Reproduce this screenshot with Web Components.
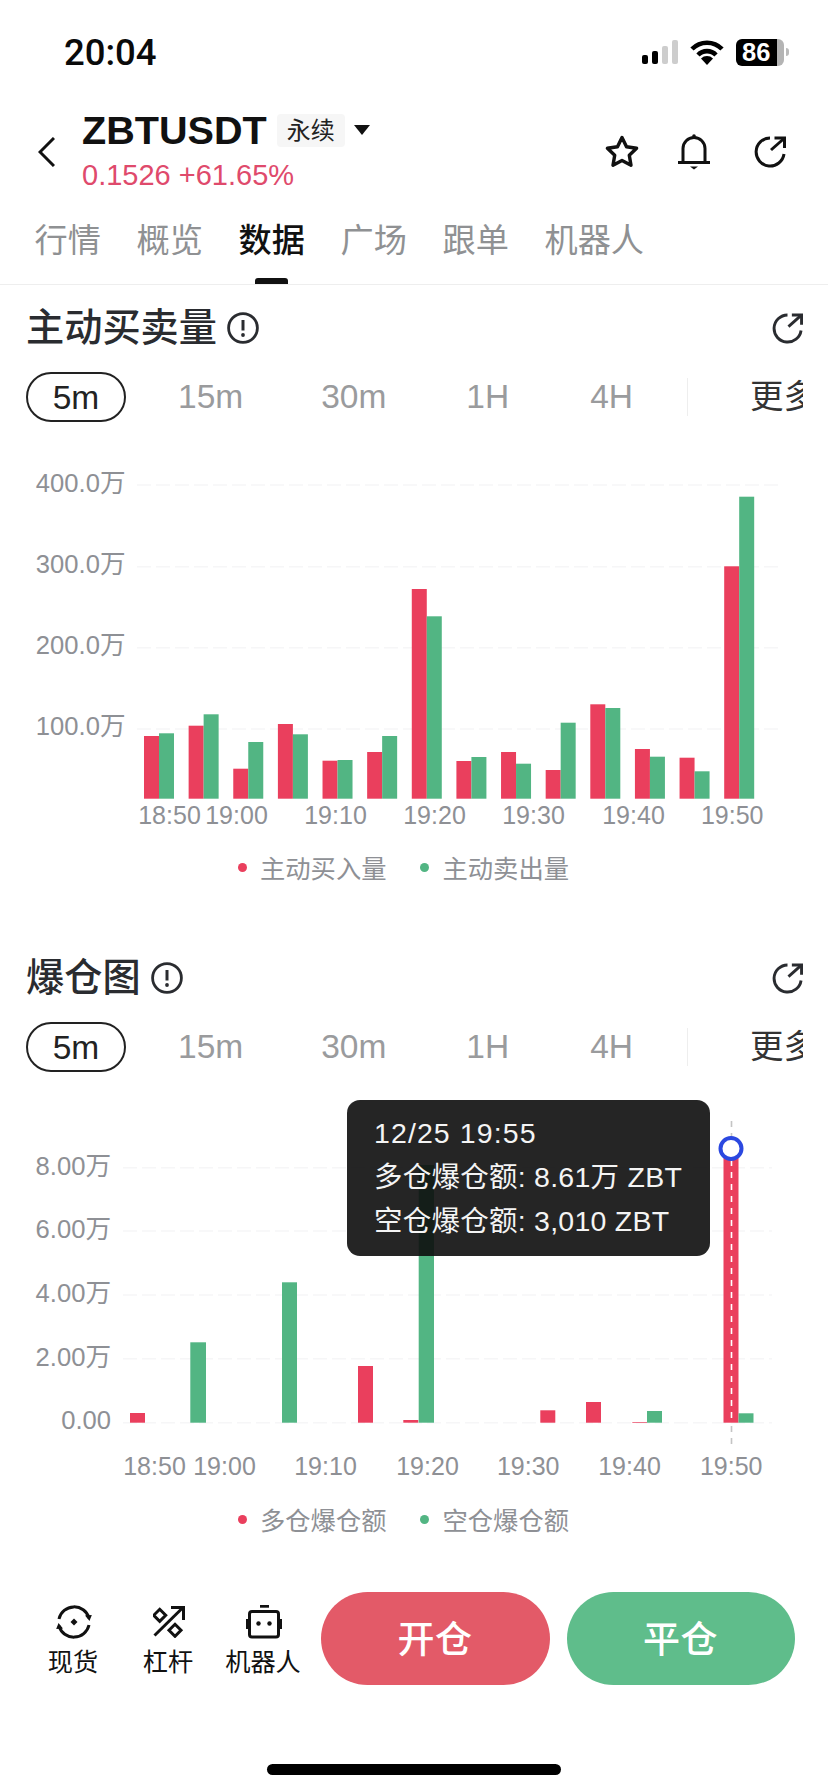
<!DOCTYPE html>
<html lang="zh"><head><meta charset="utf-8"><title>ZBTUSDT</title>
<style>
html,body{margin:0;padding:0;background:#fff}
body{width:828px;height:1792px;overflow:hidden;font-family:"Liberation Sans","Noto Sans CJK SC",sans-serif;color:#111}
</style></head><body>
<app-page>
  <status-bar></status-bar>
  <coin-header></coin-header>
  <nav-tabs></nav-tabs>
  <chart-section id="c1" title-text="主动买卖量"></chart-section>
  <chart-section id="c2" title-text="爆仓图"></chart-section>
  <action-bar></action-bar>
  <home-bar></home-bar>
</app-page>
<script>
const FONT='"Liberation Sans","Noto Sans CJK SC",sans-serif';
function g1(){
  const t=[[736,733.3],[725.7,714.3],[768.7,742],[724,734.3],[760.7,760],[752,736],[589,616.3],[761,757],[752,763.7],[770,722.7],[704.3,708],[749,756.7],[757.7,771.3],[566.3,496.7]];
  const r=[];t.forEach((v,i)=>{const x=144+i*44.63;r.push([x,x+15,v[0],0],[x+15,x+30,v[1],1]);});return r;
}
const CHARTS={
 c1:{top:422,h:423,base:798.7,grid:[485,566.7,647.7,729],gx:[137,782],bars:g1(),yr:125.5,
  yl:[['400.0万',483],['300.0万',564],['200.0万',645],['100.0万',726]],
  xl:[['18:50',169.5],['19:00',236.5],['19:10',335.5],['19:20',434.5],['19:30',533.5],['19:40',633.5],['19:50',732.2]],xy:815,
  leg:['主动买入量','主动卖出量'],lx:237.5,lm:2},
 c2:{top:1072,h:428,base:1422.7,grid:[1167.7,1231,1295,1358.7,1422.7],gx:[123,772],yr:111,
  bars:[[130,145,1413,0],[190.3,206,1342.3,1],[282,297,1282.3,1],[358,373,1366,0],[403.3,418.3,1420,0],[418.7,434,1165,1],[540.3,555.3,1410.3,0],[586,601,1402,0],[632.3,647,1422,0],[647,662,1411,1],[723.5,738.5,1148,0],[738.5,753.5,1413.3,1]],
  cross:`<line x1="731.5" x2="731.5" y1="1121" y2="1148" stroke="#c4c4c4" stroke-width="1.6" stroke-dasharray="6 6"/><line x1="731.5" x2="731.5" y1="1148" y2="1423" stroke="#fff" stroke-width="1.6" stroke-dasharray="6 6"/><line x1="731.5" x2="731.5" y1="1426" y2="1446" stroke="#c4c4c4" stroke-width="1.6" stroke-dasharray="6 6"/><circle cx="731" cy="1148.5" r="10.5" fill="#fff" stroke="#2b48e0" stroke-width="4"/>`,
  yl:[['8.00万',1166],['6.00万',1229],['4.00万',1293],['2.00万',1357],['0.00',1420]],
  xl:[['18:50',154.5],['19:00',224.5],['19:10',325.5],['19:20',427.5],['19:30',528.2],['19:40',629.5],['19:50',731.2]],xy:1466.7,
  leg:['多仓爆仓额','空仓爆仓额'],lx:237.5,lm:-1,
  tip:'<div class="d">12/25 19:55</div><div>多仓爆仓额: 8.61万 ZBT</div><div>空仓爆仓额: 3,010 ZBT</div>'}
};
const ICON={
 share:'<svg xmlns="http://www.w3.org/2000/svg" viewBox="0 0 32 32" fill="none" stroke="currentColor" stroke-width="3"><path d="M16 2 A14 14 0 1 0 30 18"/><path d="M17 14 L30 2.5"/><path d="M20.5 2 H30.5 V12"/></svg>',
 info:'<svg xmlns="http://www.w3.org/2000/svg" viewBox="0 0 32 32" fill="none" stroke="currentColor" stroke-width="2.8"><circle cx="16" cy="16" r="14.4"/><path d="M16 8 V18.5" stroke-width="3"/><circle cx="16" cy="23" r="1.9" fill="currentColor" stroke="none"/></svg>'
};
function def(name,html){
  const t=document.createElement('template');t.innerHTML=html;
  customElements.define(name,class extends HTMLElement{
    constructor(){super();this.attachShadow({mode:'open'}).appendChild(t.content.cloneNode(true));}
  });
}
def('app-page',`<style>:host{display:flex;flex-direction:column;width:828px;height:1792px;overflow:hidden;background:#fff}</style><slot></slot>`);

def('status-bar',`<style>
:host{display:flex;align-items:center;height:104px;box-sizing:border-box;padding-left:64px}
.t{font:500 36.5px/40px Roboto,"Liberation Sans",sans-serif;color:#0a0a0a;flex:1;padding-top:2px}
.r{display:flex;align-items:center;margin-right:39px}
.bat{width:48px;height:27px;border-radius:6px;background:linear-gradient(90deg,#000 0 41px,#b4b4b4 41px);color:#fff;font:700 25.5px/27px "Liberation Sans",sans-serif;box-sizing:border-box;padding-left:6px}
.nub{width:3px;height:8px;background:#bbb;border-radius:0 3px 3px 0;margin-left:2px}
svg{display:block}
</style>
<div class="t">20:04</div>
<div class="r">
<svg width="36" height="24" viewBox="0 0 36 24" style="margin-right:12px"><rect x="0" y="15" width="6" height="9" rx="2"/><rect x="10" y="11" width="6" height="13" rx="2"/><rect x="20" y="6" width="6" height="18" rx="2" fill="#cdcdcd"/><rect x="30" y="0" width="6" height="24" rx="2" fill="#cdcdcd"/></svg>
<svg width="34" height="26" viewBox="0 0 34 26" style="margin-right:12px" fill="none" stroke="#000" stroke-width="4.6"><path d="M2 10 A21 21 0 0 1 32 10"/><path d="M8 16 A12.5 12.5 0 0 1 26 16"/><path d="M11 19.6 A8.5 8.5 0 0 1 23 19.6 L17 26 Z" fill="#000" stroke="none"/></svg>
<div class="bat">86</div><div class="nub"></div>
</div>`);

def('coin-header',`<style>
:host{display:flex;align-items:flex-start;height:92px;box-sizing:border-box;padding:6px 0 0 38px;font-family:${FONT}}
.back{margin:27px 0 0 0;width:17px;height:30px;flex:none}
.col{margin-left:27px;flex:1}
.row{display:flex;align-items:center;height:40px}
.sym{font:700 39.6px/40px "Liberation Sans",sans-serif;color:#111}
.tag{margin-left:10px;width:68px;height:33px;background:#f6f6f6;border-radius:4px;font-size:24px;line-height:33px;text-align:center;color:#222}
.tri{margin-left:9px;width:0;height:0;border-left:8px solid transparent;border-right:8px solid transparent;border-top:10px solid #111}
.px{margin-top:7px;font:400 29px/36px "Liberation Sans",sans-serif;color:#df4a6c}
.ic{display:flex;align-items:center;margin:24px 42.5px 0 0;color:#111}
.ic svg{display:block}
</style>
<svg class="back" viewBox="0 0 17 30" fill="none" stroke="#111" stroke-width="3"><path d="M16 1 L2 15 L16 29"/></svg>
<div class="col"><div class="row"><span class="sym">ZBTUSDT</span><span class="tag">永续</span><span class="tri"></span></div><div class="px">0.1526 +61.65%</div></div>
<div class="ic">
<svg width="36" height="36" viewBox="-2 -2 40 40" fill="none" stroke="#111" stroke-width="3.8" stroke-linejoin="round"><path d="M18 2 L23 12.1 L34.2 13.8 L26.1 21.6 L28 32.8 L18 27.5 L8 32.8 L9.9 21.6 L1.8 13.8 L13 12.1 Z"/></svg>
<svg width="32" height="36" viewBox="0 0 32 36" style="margin-left:38px" fill="none" stroke="#111" stroke-width="3"><path d="M5 28 V14.5 A11 11 0 0 1 27 14.5 V28"/><path d="M0 28.5 H32"/><circle cx="16" cy="2" r="1.8" fill="#111" stroke="none"/><path d="M12 32.5 H20 L16 35.5 Z" fill="#111" stroke="none"/></svg>
<svg width="32" height="32" viewBox="0 0 32 32" style="margin-left:44px" fill="none" stroke="#111" stroke-width="3"><path d="M16 2 A14 14 0 1 0 30 18"/><path d="M17 14 L30 2.5"/><path d="M20.5 2 H30.5 V12"/></svg>
</div>`);

def('nav-tabs',`<style>
:host{display:flex;height:89px;box-sizing:border-box;padding:25px 0 0 34.5px;border-bottom:1px solid #eee;font:400 33.2px/40px ${FONT};color:#8f9193}
span{position:relative;width:102px;white-space:nowrap}
.on{color:#111;font-weight:500}
.on::after{content:"";position:absolute;left:16px;top:57px;width:33px;height:6px;background:#111;border-radius:3px 3px 0 0}
</style><span>行情</span><span>概览</span><span class="on">数据</span><span>广场</span><span>跟单</span><span>机器人</span>`);

customElements.define('chart-section',class extends HTMLElement{
  constructor(){super();this.attachShadow({mode:'open'});}
  connectedCallback(){
    const d=CHARTS[this.id];
    const W=828,y0=d.top,h=d.h;
    let s='';
    for(const g of d.grid)s+=`<line x1="${d.gx[0]}" x2="${d.gx[1]}" y1="${g}" y2="${g}" stroke="#f6f6f7" stroke-width="1.4" stroke-dasharray="14 5"/>`;
    for(const b of d.bars)s+=`<rect x="${b[0]}" y="${b[2]}" width="${b[1]-b[0]}" height="${d.base-b[2]}" fill="${b[3]?'#52b583':'#ea3f5d'}"/>`;
    if(d.cross)s+=d.cross;
    for(const l of d.yl)s+=`<text class="y" x="${d.yr}" y="${l[1]+8.5}" text-anchor="end">${l[0]}</text>`;
    for(const l of d.xl)s+=`<text x="${l[1]}" y="${d.xy+8.5}" text-anchor="middle">${l[0]}</text>`;
    this.shadowRoot.innerHTML=`<style>
:host{display:block;height:650px;position:relative;font-family:${FONT}}
.head{display:flex;align-items:center;height:50px;margin:18px 25.5px 0 26px}
.title{font-size:38.2px;line-height:50px;font-weight:500;color:#2a2c30}
.info{width:32px;height:32px;margin-left:10px;color:#2a2c30}
.sp{flex:1}
.share{width:31px;height:31px;color:#2a2c30}
.info svg,.share svg{display:block;width:100%;height:100%}
.tabs{display:flex;align-items:center;height:50px;margin:19px 25.5px 0 26px;overflow:hidden;font-size:33.5px;line-height:52px;color:#9a9b9d;white-space:nowrap}
.pill{box-sizing:border-box;width:100px;height:50px;line-height:47px;border:2px solid #222;border-radius:25px;text-align:center;color:#222;margin-right:52px;flex:none}
.t15{margin-right:78px}.t30{margin-right:80px}.t1{margin-right:81px}.t4{margin-right:54px}
.sep{width:1px;height:38px;background:#eee;margin-right:62px;flex:none}
.more{color:#333;flex:none}
.chart{position:relative;height:${h}px}
svg.c{display:block;position:absolute;left:0;top:0}
svg.c text{font:25px ${FONT};fill:#8e9095}
svg.c text.y{font-size:25.6px}
.legend{display:flex;align-items:center;height:40px;padding-left:${d.lx}px;font-size:25.3px;color:#8e9095}
.dot{width:9px;height:9px;border-radius:50%;margin-right:13.5px;flex:none}
.lab{width:125px;margin-right:35px;white-space:nowrap}
.tip{position:absolute;left:347px;top:28px;width:363px;height:156px;box-sizing:border-box;padding:11px 0 0 27px;border-radius:13px;background:rgba(13,13,13,.9);color:#f4f4f4;font-size:28.5px;line-height:44px;white-space:nowrap;letter-spacing:.25px}
.tip .d{letter-spacing:1.1px}
</style>
<div class="head"><span class="title">${this.getAttribute('title-text')}</span><span class="info">${ICON.info}</span><span class="sp"></span><span class="share">${ICON.share}</span></div>
<div class="tabs"><span class="pill">5m</span><span class="t15">15m</span><span class="t30">30m</span><span class="t1">1H</span><span class="t4">4H</span><span class="sep"></span><span class="more">更多</span></div>
<div class="chart"><svg class="c" width="${W}" height="${h}" viewBox="0 ${y0} ${W} ${h}">${s}</svg>${d.tip?`<div class="tip">${d.tip}</div>`:''}</div>
<div class="legend" style="margin-top:${d.lm}px"><span class="dot" style="background:#ea3f5d"></span><span class="lab">${d.leg[0]}</span><span class="dot" style="background:#52b583"></span><span class="lab">${d.leg[1]}</span></div>`;
  }
});

def('action-bar',`<style>
:host{display:flex;align-items:flex-start;height:93px;margin-top:7px;padding-left:25.5px;font-family:${FONT};color:#111}
.it{width:95px;display:flex;flex-direction:column;align-items:center;flex:none}
.ib{height:37px;margin-top:11px;display:flex;align-items:center}
.ib svg{position:relative;left:1px}
.it span{font-size:25.2px;line-height:34px;margin-top:5px;white-space:nowrap}
svg{display:block}
.btn{height:93px;border-radius:47px;color:#fff;font-size:37px;font-weight:500;line-height:97px;text-align:center;letter-spacing:.5px;flex:none}
.a{width:229px;margin-left:10px;background:#e35a68}
.b{width:228px;margin-left:17px;background:#5fbd8b}
</style>
<div class="it"><div class="ib"><svg width="36" height="36" viewBox="0 0 36 36" fill="none" stroke="#111" stroke-width="3"><path d="M3 15 A15.5 15.5 0 0 1 33 14"/><path d="M29 11.5 L33.5 17 L35.8 11" fill="#111" stroke="none"/><path d="M33 21 A15.5 15.5 0 0 1 3 22"/><path d="M7 24.5 L2.5 19 L0.2 25" fill="#111" stroke="none"/><path d="M18 14.5 L21.5 18 L18 21.5 L14.5 18 Z" fill="#111" stroke="none"/></svg></div><span>现货</span></div>
<div class="it"><div class="ib"><svg width="32" height="32" viewBox="0 0 32 32" fill="none" stroke="#111" stroke-width="3"><path d="M6.7 3.3 L12.7 9.3 L6.7 15.3 L.7 9.3 Z"/><path d="M22 18.3 L28 24.3 L22 30.3 L16 24.3 Z"/><path d="M1.5 29.5 L30 1.5"/><path d="M18 1.5 H30.5 V14"/></svg></div><span>杠杆</span></div>
<div class="it"><div class="ib"><svg width="36" height="34" viewBox="0 0 36 34" fill="none" stroke="#111" stroke-width="3"><path d="M14 1.2 H23"/><rect x="3.5" y="6.5" width="29" height="25.5" rx="2.5"/><rect x="0" y="14" width="3" height="10" fill="#111" stroke="none"/><rect x="33" y="14" width="3" height="10" fill="#111" stroke="none"/><circle cx="12.5" cy="18.5" r="2.2" fill="#111" stroke="none"/><circle cx="23.5" cy="18.5" r="2.2" fill="#111" stroke="none"/></svg></div><span>机器人</span></div>
<div class="btn a">开仓</div><div class="btn b">平仓</div>`);

def('home-bar',`<style>:host{display:block;padding:79px 0 0 267px}div{width:294px;height:10.5px;background:#000;border-radius:6px}</style><div></div>`);
</script>
</body></html>
